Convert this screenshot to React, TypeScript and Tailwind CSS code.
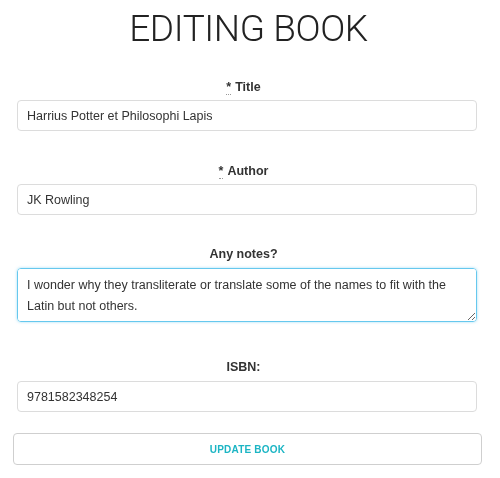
import React from 'react';

const Label = ({ required, children }: { required?: boolean; children: React.ReactNode }) => (
  <label className="block pr-[7px] text-center text-[12.5px] leading-[18px] font-bold text-[#333]">
    {required && (
      <abbr title="required" className="no-underline border-b border-dotted border-[#999] cursor-help mr-1">
        *
      </abbr>
    )}
    {children}
  </label>
);

const inputCls =
  'block w-full h-[31px] px-[9px] text-[12.5px] text-[#333] bg-white border border-[#dcdcdc] rounded-[4px] outline-none';

const App = () => {
  return (
    <div className="w-[500px] h-[478px] bg-white font-['Liberation_Sans',Arial,sans-serif] overflow-hidden">
      {/* Header */}
      <h1 className="pt-[7px] text-center text-[37px] leading-[44px] font-light text-[#222] font-['Roboto',sans-serif] tracking-[-0.4px] pr-[3px]">
        EDITING BOOK
      </h1>

      <form className="pl-[17px] pr-[23px] mt-[27px]" onSubmit={(e) => e.preventDefault()}>
        {/* Title */}
        <div className="mb-[31px]">
          <Label required>Title</Label>
          <input className={inputCls + ' mt-[4px]'} defaultValue="Harrius Potter et Philosophi Lapis" />
        </div>

        {/* Author */}
        <div className="mb-[30px]">
          <Label required>Author</Label>
          <input className={inputCls + ' mt-[4px]'} defaultValue="JK Rowling" />
        </div>

        {/* Notes */}
        <div className="mb-[36px]">
          <Label>Any notes?</Label>
          <textarea
            className="block w-full h-[54px] mt-[5px] px-[9px] py-[6px] text-[12.5px] leading-[21px] text-[#333] bg-white border border-[#66c8ee] rounded-[4px] outline-none shadow-[0_0_3px_rgba(102,200,238,0.6)]"
            defaultValue="I wonder why they transliterate or translate some of the names to fit with the Latin but not others."
          />
        </div>

        {/* ISBN */}
        <div className="mb-[21px]">
          <Label>ISBN:</Label>
          <input className={inputCls + ' mt-[5px]'} defaultValue="9781582348254" />
        </div>

        <div className="-ml-[4px] -mr-[5px]">
          <button
            type="submit"
            className="block w-full h-[32px] bg-white border border-[#cfcfcf] rounded-[4px] text-[10px] font-bold tracking-[0.2px] text-[#1cb5c4]"
          >
            UPDATE BOOK
          </button>
        </div>
      </form>
    </div>
  );
};

export default App;
